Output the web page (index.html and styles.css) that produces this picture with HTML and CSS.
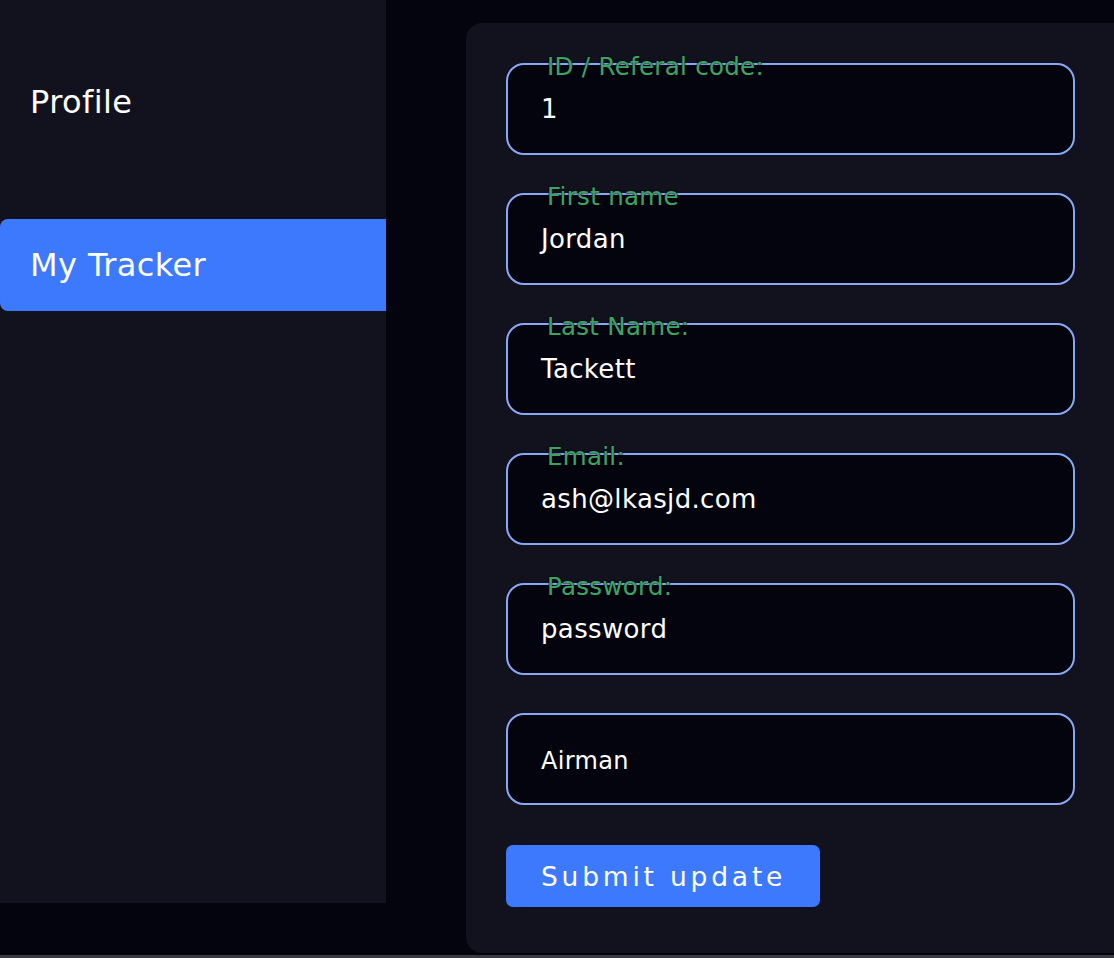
FILE: index.html
```html
<!DOCTYPE html>
<html>
<head>
<meta charset="utf-8">
<link rel="stylesheet" href="styles.css">
</head>
<body>
<div class="page">
  <aside class="sidebar">
    <div class="nav-item">Profile</div>
    <div class="nav-item active">My Tracker</div>
  </aside>
  <main class="card">
    <form class="form">
      <div class="field"><span class="label">ID / Referal code:</span><div class="input">1</div></div>
      <div class="field"><span class="label">First name</span><div class="input">Jordan</div></div>
      <div class="field"><span class="label">Last Name:</span><div class="input">Tackett</div></div>
      <div class="field"><span class="label">Email:</span><div class="input">ash@lkasjd.com</div></div>
      <div class="field"><span class="label">Password:</span><div class="input">password</div></div>
      <div class="field"><div class="input select">Airman</div></div>
      <div class="actions"><button type="button" class="btn">Submit update</button></div>
    </form>
  </main>
</div>
<div class="bottom-bar"></div>
</body>
</html>
```
FILE: styles.css
```css
html, body {
  margin: 0;
  padding: 0;
  background: #04040f;
  height: 958px;
  overflow: hidden;
  font-family: "DejaVu Sans", "Open Sans", sans-serif;
  color: #ffffff;
}
.page {
  display: flex;
  height: 955px;
  align-items: flex-start;
}
.sidebar {
  width: 386px;
  height: 903px;
  background: #12121e;
  display: flex;
  flex-direction: column;
  gap: 71px;
  padding-top: 56px;
  box-sizing: border-box;
  flex-shrink: 0;
}
.nav-item {
  height: 92px;
  display: flex;
  align-items: center;
  padding-left: 30px;
  font-size: 32px;
  letter-spacing: 0.4px;
  border-radius: 8px 0 0 8px;
}
.nav-item.active {
  background: #3d79fd;
}
.card {
  margin-left: 80px;
  margin-top: 23px;
  height: 930px;
  flex: 1;
  margin-right: -40px;
  background: #12121e;
  border-radius: 16px;
  padding: 40px 0 0 40px;
  box-sizing: border-box;
}
.form {
  display: flex;
  flex-direction: column;
  gap: 38px;
  width: 569px;
}
.field {
  position: relative;
}
.label {
  position: absolute;
  left: 41px;
  top: -8px;
  font-size: 24.5px;
  line-height: 24px;
  letter-spacing: 0.3px;
  color: #3ca462;
  text-shadow: 0 0 2px #0a0a14, 0 0 1px #0a0a14;
}
.input {
  height: 92px;
  box-sizing: border-box;
  border: 2px solid #88a8f5;
  border-radius: 18px;
  background: #04040f;
  display: flex;
  align-items: center;
  padding-left: 33px;
  font-size: 26px;
  letter-spacing: 0.35px;
}
.input.select {
  font-size: 24px;
  padding-top: 4px;
}
.actions {
  margin-top: 2px;
}
.btn {
  width: 314px;
  height: 62px;
  border: none;
  border-radius: 7px;
  background: #3d79fd;
  color: #ffffff;
  font-family: inherit;
  font-size: 26.5px;
  letter-spacing: 3.8px;
  text-align: left;
  padding: 0 0 0 35px;
}
.bottom-bar {
  height: 3px;
  background: #3b3b42;
}
```
